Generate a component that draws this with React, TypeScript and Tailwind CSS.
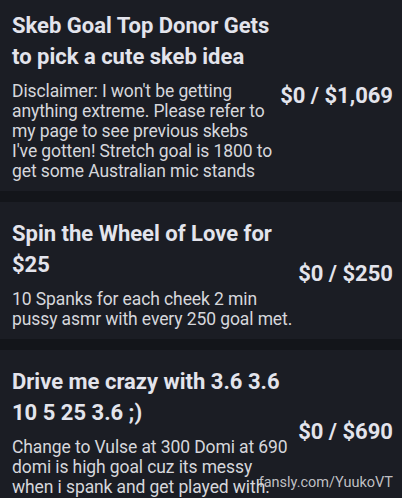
import React from "react";

type Goal = { title: string; desc: string; price: string; pad: string };

const goals: Goal[] = [
  {
    title: "Skeb Goal Top Donor Gets to pick a cute skeb idea",
    desc: "Disclaimer: I won't be getting anything extreme. Please refer to my page to see previous skebs I've gotten! Stretch goal is 1800 to get some Australian mic stands",
    price: "$0 / $1,069",
    pad: "pl-[5px]",
  },
  {
    title: "Spin the Wheel of Love for $25",
    desc: "10 Spanks for each cheek 2 min pussy asmr with every 250 goal met.",
    price: "$0 / $250",
    pad: "pl-[2px]",
  },
  {
    title: "Drive me crazy with 3.6 3.6 10 5 25 3.6 ;)",
    desc: "Change to Vulse at 300 Domi at 690 domi is high goal cuz its messy when i spank and get played with.",
    price: "$0 / $690",
    pad: "pl-[2px]",
  },
];

export default function App() {
  return (
    <div
      className="relative w-[402px] h-[498px] overflow-hidden bg-[#13151a]"
      style={{ fontFamily: "Roboto, 'Liberation Sans', sans-serif" }}
    >
      <div className="-mt-[6px] flex flex-col gap-[11px]">
        {goals.map((g, i) => (
          <div
            key={i}
            className="flex items-center bg-[#1b1d24] pl-3 pr-[9px] pt-4 pb-[10px]"
          >
            <div className="flex-1 min-w-0">
              <div className="text-[22px] leading-[31px] font-bold text-[#e3e4ec]">
                {g.title}
              </div>
              <div className="mt-[9px] text-[17.5px] leading-[20px] tracking-[-0.1px] text-[#d6d7dc]">
                {g.desc}
              </div>
            </div>
            <div
              className={
                (g.pad === "pl-[5px]" ? "pl-[5px]" : "pl-[2px]") +
                " shrink-0 text-[22px] font-bold text-[#e3e4ec] whitespace-nowrap"
              }
            >
              {g.price}
            </div>
          </div>
        ))}
      </div>
      <div className="absolute right-[9px] bottom-[5px] text-[14.5px] leading-[20px] text-[#d4d4d8]/90">
        fansly.com/YuukoVT
      </div>
    </div>
  );
}
